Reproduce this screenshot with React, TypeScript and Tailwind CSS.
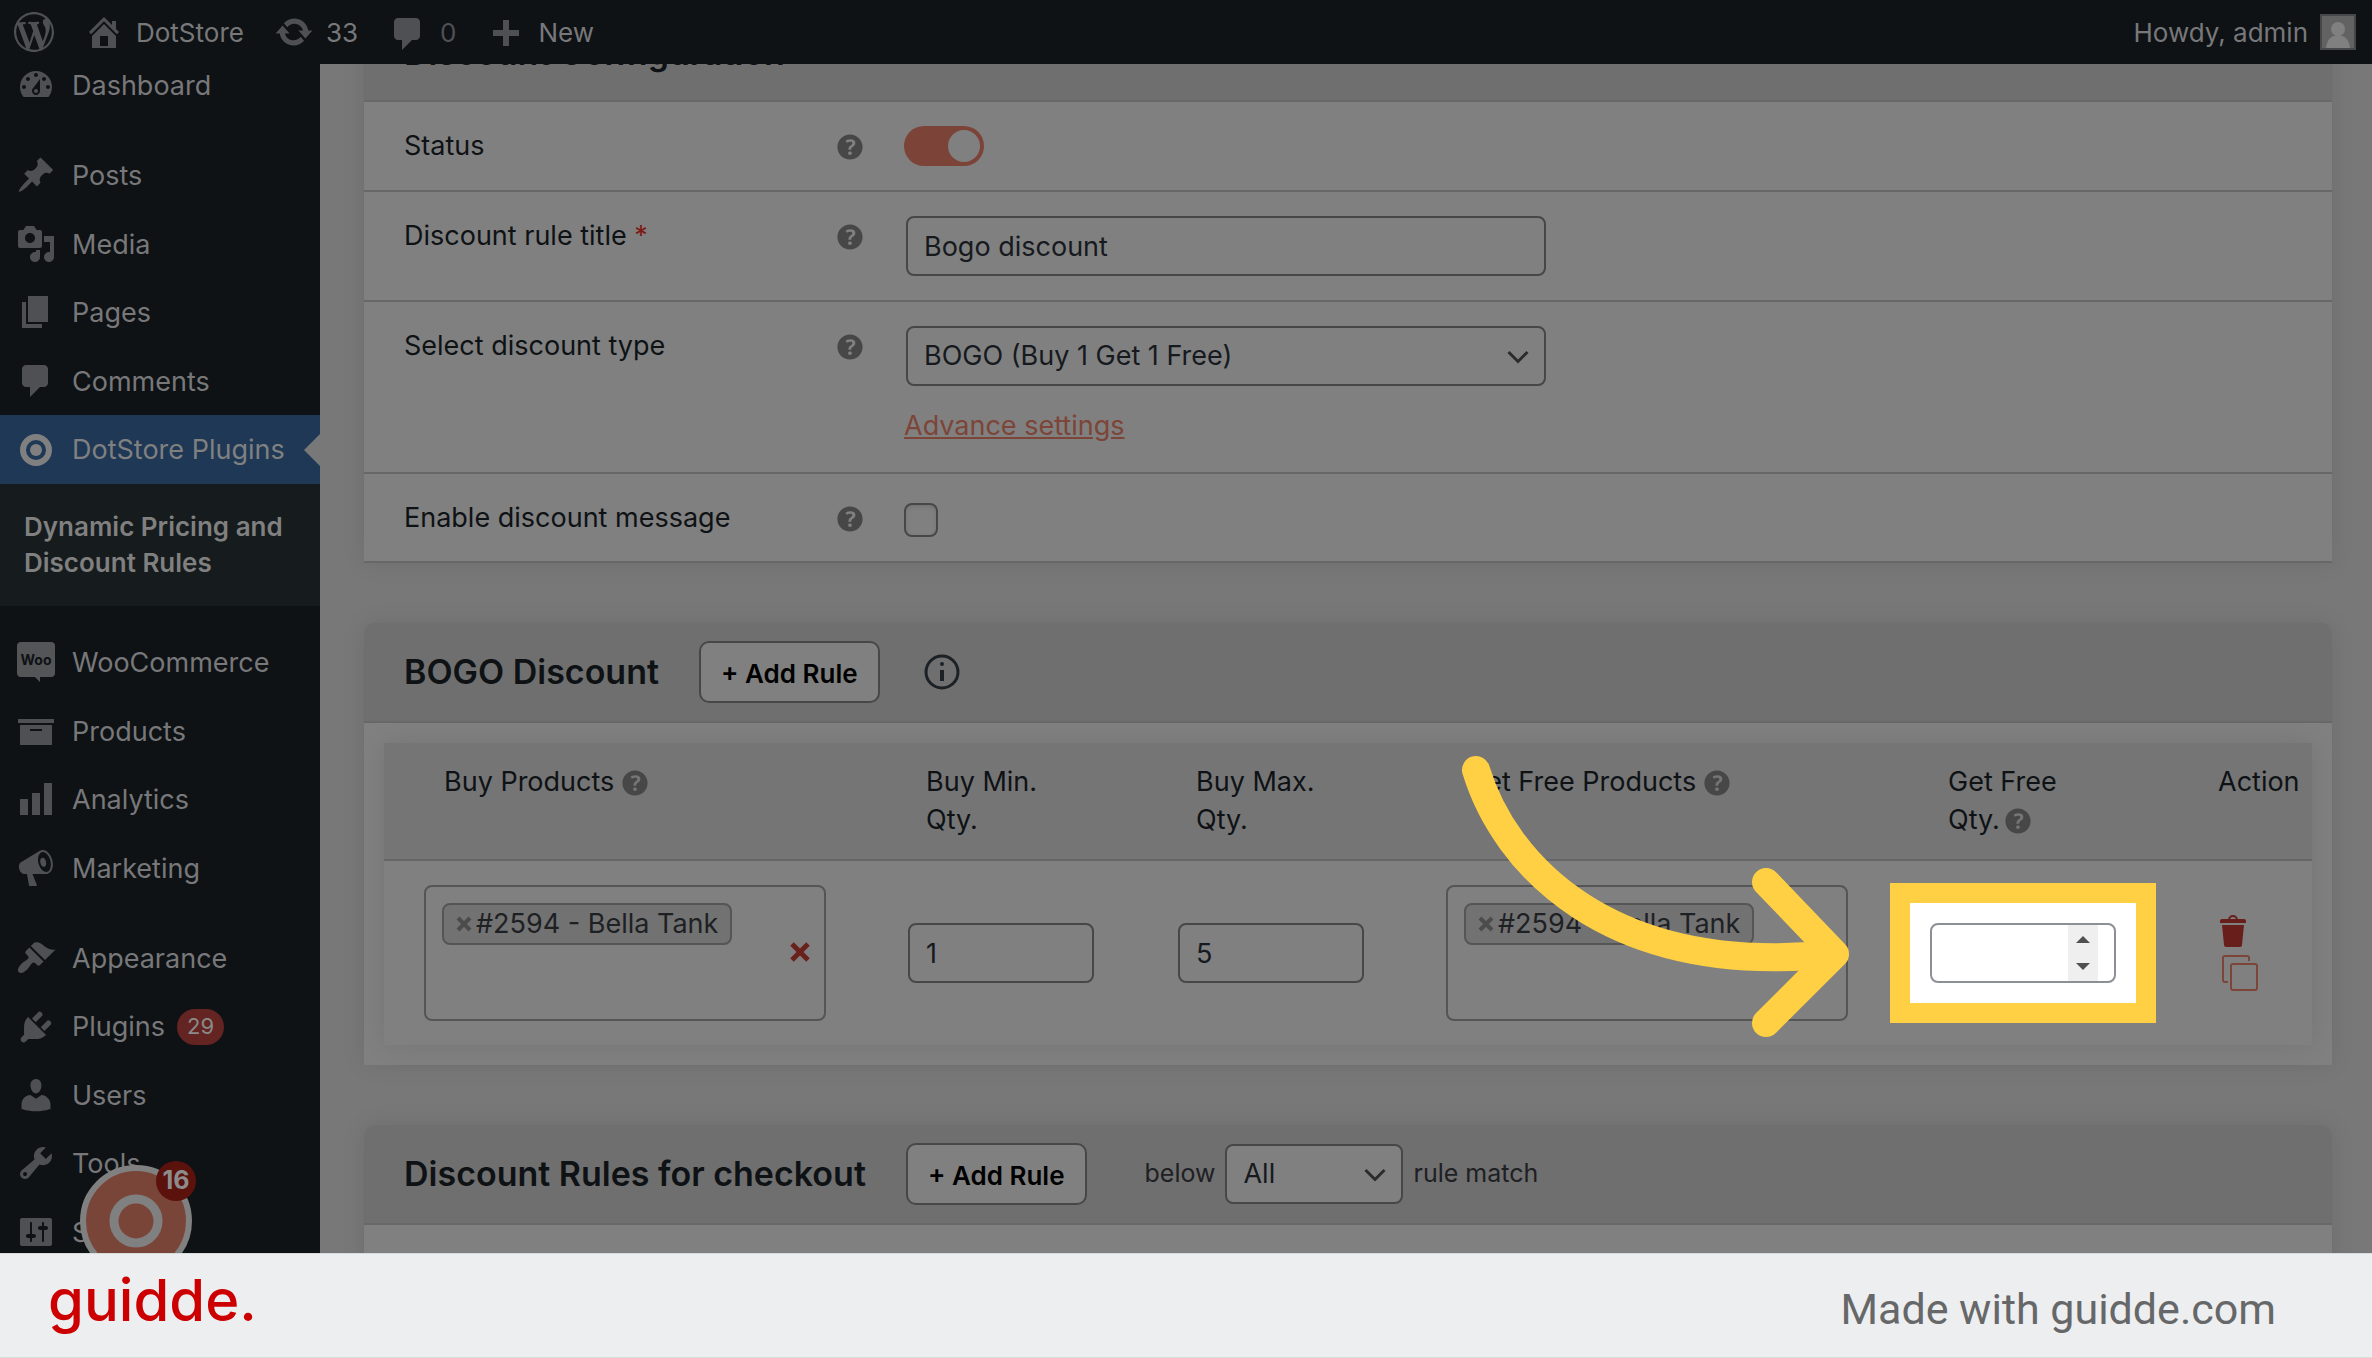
import React, { useState } from 'react';
import clsx from 'clsx';

const icons = {
  wordpress:
    'M20 10c0-5.51-4.49-10-10-10C4.48 0 0 4.49 0 10c0 5.52 4.48 10 10 10 5.51 0 10-4.48 10-10zM7.78 15.37L4.37 6.22c.55-.02 1.17-.08 1.17-.08.5-.06.44-1.13-.06-1.11 0 0-1.45.11-2.37.11-.18 0-.37 0-.58-.01C4.12 2.69 6.87 1.11 10 1.11c2.33 0 4.45.87 6.05 2.34-.68-.11-1.65.39-1.65 1.58 0 .74.45 1.36.9 2.1.35.61.55 1.36.55 2.46 0 1.49-1.4 5-1.4 5l-3.03-8.37c.54-.02.82-.17.82-.17.5-.05.44-1.25-.06-1.22 0 0-1.44.12-2.38.12-.87 0-2.33-.12-2.33-.12-.5-.03-.56 1.2-.06 1.22l.92.08 1.26 3.41zM17.41 10c.24-.64.74-1.87.43-4.25.7 1.29 1.05 2.71 1.05 4.25 0 3.29-1.73 6.24-4.4 7.78.97-2.59 1.94-5.2 2.92-7.78zM6.1 18.09C3.12 16.65 1.11 13.53 1.11 10c0-1.3.23-2.48.72-3.59C3.25 10.3 4.67 14.2 6.1 18.09zm4.03-6.63l2.58 6.98c-.86.29-1.76.45-2.71.45-.79 0-1.57-.11-2.29-.33.81-2.38 1.62-4.74 2.42-7.1z',
  home: 'M16 8.5l1.53 1.53-1.06 1.06L10 4.6l-6.47 6.49-1.06-1.06L10 2.5l4 4v-2h2v4zm-6-2.46l6 5.99V18H4v-5.97zM12 17v-5H8v5h4z',
  update:
    'M10.2 3.28c3.53 0 6.43 2.61 6.92 6h2.08l-3.5 4-3.5-4h2.32c-.45-1.97-2.21-3.45-4.32-3.45-1.45 0-2.73.71-3.54 1.78L4.95 5.66C6.23 4.2 8.11 3.28 10.2 3.28zm-.4 13.44c-3.52 0-6.43-2.61-6.92-6H.8l3.5-4c1.17 1.33 2.33 2.67 3.5 4H5.48c.45 1.97 2.21 3.45 4.32 3.45 1.45 0 2.73-.71 3.54-1.78l1.71 1.95c-1.28 1.46-3.15 2.38-5.25 2.38z',
  comments: 'M5 2h9c1.1 0 2 .9 2 2v7c0 1.1-.9 2-2 2h-2l-5 5v-5H5c-1.1 0-2-.9-2-2V4c0-1.1.9-2 2-2z',
  plus: 'M16.5 9v3h-5v5h-3v-5h-5V9h5V4h3v5h5z',
  dashboard:
    'M3.76 16h12.48c1.1-1.37 1.76-3.11 1.76-5 0-4.42-3.58-8-8-8s-8 3.58-8 8c0 1.89.66 3.63 1.76 5zM10 4c.55 0 1 .45 1 1s-.45 1-1 1-1-.45-1-1 .45-1 1-1zM6 6c.55 0 1 .45 1 1s-.45 1-1 1-1-.45-1-1 .45-1 1-1zm8 0c.55 0 1 .45 1 1s-.45 1-1 1-1-.45-1-1 .45-1 1-1zm-5.37 5.55L12 7v6c0 1.1-.9 2-2 2s-2-.9-2-2c0-.57.24-1.08.63-1.45zM4 10c.55 0 1 .45 1 1s-.45 1-1 1-1-.45-1-1 .45-1 1-1zm12 0c.55 0 1 .45 1 1s-.45 1-1 1-1-.45-1-1 .45-1 1-1zm-5 3c0-.55-.45-1-1-1s-1 .45-1 1 .45 1 1 1 1-.45 1-1z',
  posts:
    'M10.44 3.02l1.82-1.82 6.36 6.35-1.83 1.82c-1.05-.68-2.48-.57-3.41.36l-.75.75c-.92.93-1.04 2.35-.35 3.41l-1.83 1.82-2.41-2.41-2.8 2.79c-.42.42-3.38 2.71-3.8 2.29s1.86-3.39 2.28-3.81l2.79-2.79L4.1 9.36l1.83-1.82c1.05.69 2.48.57 3.4-.36l.75-.75c.93-.92 1.05-2.35.36-3.41z',
  media:
    'M13 11V4c0-.55-.45-1-1-1h-1.67L9 1H5L3.67 3H2c-.55 0-1 .45-1 1v7c0 .55.45 1 1 1h10c.55 0 1-.45 1-1zM7 4.5c1.38 0 2.5 1.12 2.5 2.5S8.38 9.5 7 9.5 4.5 8.38 4.5 7 5.62 4.5 7 4.5zM14 6h5v10.5c0 1.38-1.12 2.5-2.5 2.5S14 17.88 14 16.5s1.12-2.5 2.5-2.5c.17 0 .34.02.5.05V9h-3V6zm-4 8.05V13h2v3.5c0 1.38-1.12 2.5-2.5 2.5S7 17.88 7 16.5 8.12 14 9.5 14c.17 0 .34.02.5.05z',
  pages: 'M6 15V2h10v13H6zm-1 1h8v2H3V5h2v11z',
  products: 'M19 4v2H1V4h18zM2 7h16v10H2V7zm11 3V9H7v1h6z',
  analytics: 'M18 18V2h-4v16h4zm-6 0V7H8v11h4zm-6 0v-8H2v8h4z',
  marketing:
    'M18.15 5.94c.46 1.62.38 3.22-.02 4.48-.42 1.28-1.26 2.18-2.3 2.48-.16.06-.26.06-.4.06-.06.02-.12.02-.18.02-.06.02-.14.02-.22.02h-6.8l2.22 5.5c.02.14-.06.26-.14.34-.08.1-.24.16-.34.16H6.95c-.1 0-.26-.06-.34-.16-.08-.08-.16-.2-.14-.34l-1-5.5H4.25l-.02-.02c-.5.06-1.08-.18-1.54-.62s-.88-1.08-1.06-1.88c-.24-.8-.2-1.56-.02-2.2.18-.62.58-1.08 1.06-1.3l.02-.02 9-5.4c.1-.06.18-.1.24-.16.06-.04.14-.08.24-.12.16-.08.28-.12.5-.18 1.04-.3 2.24.1 3.22.98s1.84 2.24 2.26 3.86zm-2.58 5.98h-.02c.4-.1.74-.34 1.04-.7.58-.7.86-1.76.86-3.04 0-.64-.1-1.3-.28-1.98-.34-1.36-1.02-2.5-1.78-3.24s-1.68-1.1-2.46-.88c-.82.22-1.4.96-1.7 2-.32 1.04-.28 2.36.06 3.72.38 1.36 1 2.5 1.8 3.24.78.74 1.62 1.1 2.48.88zm-2.54-7.08c.22-.04.42-.02.62.04.38.16.76.48 1.02 1s.42 1.2.42 1.78c0 .3-.04.56-.12.8-.18.48-.44.84-.86.94-.34.1-.8-.06-1.14-.4s-.64-.86-.78-1.5c-.18-.62-.12-1.24.02-1.72s.48-.84.82-.94z',
  appearance:
    'M14.48 11.06L7.41 3.99l1.5-1.5c.5-.56 2.3-.47 3.51.32 1.21.8 1.43 1.28 2.91 2.1 1.18.64 2.45 1.26 4.45.85zm-.71.71L6.7 4.7 4.93 6.47c-.39.39-.39 1.02 0 1.41l1.06 1.06c.39.39.39 1.03 0 1.42-.6.6-1.43 1.11-2.21 1.69-.35.26-.7.53-1.01.84C1.43 14.23.4 16.08 1.4 17.07c.99 1 2.84-.03 4.18-1.36.31-.31.58-.66.85-1.02.57-.78 1.08-1.61 1.69-2.21.39-.39 1.02-.39 1.41 0l1.06 1.06c.39.39 1.02.39 1.41 0z',
  plugins:
    'M13.11 4.36L9.87 7.6 8 5.73l3.24-3.24c.35-.34 1.05-.2 1.56.32.52.51.66 1.21.31 1.55zm-8 1.77l.91-1.12 9.01 9.01-1.19.84c-.71.71-2.63 1.16-3.82 1.16H6.14L4.9 17.26c-.59.59-1.54.59-2.12 0-.59-.58-.59-1.53 0-2.12l1.24-1.24v-3.88c0-1.13.4-3.19 1.09-3.89zm7.26 3.97l3.24-3.24c.34-.35 1.04-.21 1.55.31.52.51.66 1.21.31 1.55l-3.24 3.25z',
  users:
    'M10 9.25c-2.27 0-2.73-3.44-2.73-3.44C7 4.02 7.82 2 9.97 2c2.16 0 2.98 2.02 2.71 3.81 0 0-.41 3.44-2.68 3.44zm0 2.57L12.72 10c2.39 0 4.52 2.33 4.52 4.53v2.49s-3.65 1.13-7.24 1.13c-3.65 0-7.24-1.13-7.24-1.13v-2.49c0-2.25 1.94-4.48 4.47-4.48z',
  tools:
    'M16.68 9.77c-1.34 1.34-3.3 1.67-4.95.99l-5.41 6.52c-.99.99-2.59.99-3.58 0s-.99-2.59 0-3.57l6.52-5.42c-.68-1.65-.35-3.61.99-4.95 1.28-1.28 3.12-1.62 4.72-1.06l-2.89 2.89 2.82 2.82 2.86-2.87c.53 1.58.18 3.39-1.08 4.65zM3.81 16.21c.4.39 1.04.39 1.43 0 .4-.4.4-1.04 0-1.43-.39-.4-1.03-.4-1.43 0-.39.39-.39 1.03 0 1.43z',
  settings:
    'M18 16V4c0-.55-.45-1-1-1H3c-.55 0-1 .45-1 1v12c0 .55.45 1 1 1h14c.55 0 1-.45 1-1zM8 11h1c.55 0 1 .45 1 1s-.45 1-1 1H8v1.5c0 .28-.22.5-.5.5s-.5-.22-.5-.5V13H6c-.55 0-1-.45-1-1s.45-1 1-1h1V5.5c0-.28.22-.5.5-.5s.5.22.5.5V11zm5-2h-1c-.55 0-1-.45-1-1s.45-1 1-1h1V5.5c0-.28.22-.5.5-.5s.5.22.5.5V7h1c.55 0 1 .45 1 1s-.45 1-1 1h-1v5.5c0 .28-.22.5-.5.5s-.5-.22-.5-.5V9z',
  help: 'M17 10c0-3.87-3.14-7-7-7-3.87 0-7 3.13-7 7s3.13 7 7 7c3.86 0 7-3.13 7-7zm-6.3 1.48H9.14v-.43c0-.38.08-.7.24-.98s.46-.57.88-.89c.41-.29.68-.53.81-.71.14-.18.2-.39.2-.62 0-.25-.09-.44-.28-.58-.19-.13-.45-.19-.79-.19-.58 0-1.25.19-2 .57l-.64-1.28c.87-.49 1.8-.74 2.77-.74.81 0 1.45.2 1.92.58.48.39.71.91.71 1.55 0 .43-.09.8-.29 1.11-.19.32-.57.67-1.11 1.06-.38.28-.61.49-.71.63-.1.15-.15.34-.15.57v.35zm-1.47 2.74c-.18-.17-.27-.42-.27-.73 0-.33.08-.58.26-.75s.43-.25.77-.25c.32 0 .57.09.75.26s.27.42.27.74c0 .3-.09.55-.27.72-.18.18-.43.27-.75.27-.33 0-.58-.09-.76-.26z',
};

type IconName = keyof typeof icons;

const Icon: React.FC<{ name: IconName; className?: string }> = ({ name, className }) => (
  <svg viewBox="0 0 20 20" fill="currentColor" aria-hidden="true" className={clsx('shrink-0', className)}>
    <path d={icons[name]} />
  </svg>
);

const Help: React.FC<{ className?: string }> = ({ className }) => (
  <Icon name="help" className={clsx('h-9 w-9 text-[#474747]', className)} />
);

const Chevron: React.FC = () => (
  <svg
    viewBox="0 0 22 14"
    fill="none"
    stroke="#2a2b2c"
    strokeWidth="3"
    aria-hidden="true"
    className="pointer-events-none absolute top-6 right-[17px] h-[14px] w-[22px]"
  >
    <path d="M1.5 2l9.5 9.5L20.5 2" />
  </svg>
);

const WooIcon: React.FC = () => (
  <svg viewBox="0 0 40 40" aria-hidden="true" className="h-10 w-10 shrink-0 text-[#545557]">
    <path fill="currentColor" d="M5 0h30a4 4 0 0 1 4 4v27a4 4 0 0 1-4 4H24v5l-5-5H5a4 4 0 0 1-4-4V4a4 4 0 0 1 4-4z" />
    <text x="20" y="23" textAnchor="middle" fontSize="14" fontWeight="700" fill="#0e1215">
      Woo
    </text>
  </svg>
);

const navGroups: { icon: IconName | 'woo'; label: string; count?: number }[][] = [
  [
    { icon: 'posts', label: 'Posts' },
    { icon: 'media', label: 'Media' },
    { icon: 'pages', label: 'Pages' },
    { icon: 'comments', label: 'Comments' },
  ],
  [
    { icon: 'woo', label: 'WooCommerce' },
    { icon: 'products', label: 'Products' },
    { icon: 'analytics', label: 'Analytics' },
    { icon: 'marketing', label: 'Marketing' },
  ],
  [
    { icon: 'appearance', label: 'Appearance' },
    { icon: 'plugins', label: 'Plugins', count: 29 },
    { icon: 'users', label: 'Users' },
    { icon: 'tools', label: 'Tools' },
    { icon: 'settings', label: 'Settings' },
  ],
];

const NavGroup: React.FC<{ items: (typeof navGroups)[number]; className: string }> = ({ items, className }) => (
  <ul className={clsx('flex shrink-0 flex-col', className)}>
    {items.map((item) => (
      <li key={item.label} className="flex flex-1">
        <a href="#" className="flex flex-1 items-center gap-4 pl-4">
          {item.icon === 'woo' ? <WooIcon /> : <Icon name={item.icon} className="h-10 w-10 text-[#4e5053]" />}
          <span className="pt-[2px]">{item.label}</span>
          {item.count && (
            <span className="-ml-1 flex h-9 items-center rounded-full bg-[#632422] px-[10px] text-[22px] text-[#8a8a8a]">
              {item.count}
            </span>
          )}
        </a>
      </li>
    ))}
  </ul>
);

const TopBar: React.FC = () => (
  <header className="z-10 flex h-16 shrink-0 items-center gap-[30px] bg-[#0e1215] pr-4 pl-[14px] text-[26px] text-[#78787a]">
    <a href="#" aria-label="About WordPress">
      <Icon name="wordpress" className="h-10 w-10 text-[#4e5053]" />
    </a>
    <a href="#" className="flex items-center gap-3">
      <Icon name="home" className="h-10 w-10 text-[#4e5053]" />
      DotStore
    </a>
    <a href="#" className="flex items-center gap-3">
      <Icon name="update" className="h-10 w-10 text-[#4e5053]" />
      33
    </a>
    <a href="#" className="flex items-center gap-3 text-[#4e5053]">
      <Icon name="comments" className="mt-1 h-10 w-10" />
      0
    </a>
    <a href="#" className="flex items-center gap-3">
      <Icon name="plus" className="h-10 w-10 text-[#4e5053]" />
      New
    </a>
    <a href="#" className="ml-auto flex items-center gap-3">
      Howdy, admin
      <svg viewBox="0 0 36 36" aria-hidden="true" className="h-9 w-9">
        <rect x="1" y="1" width="34" height="34" fill="#626262" stroke="#464749" strokeWidth="2" />
        <circle cx="18" cy="15" r="7" fill="#808080" />
        <path d="M6 34c1-8 5-13 12-13s11 5 12 13z" fill="#808080" />
      </svg>
    </a>
  </header>
);

const Sidebar: React.FC = () => (
  <nav className="flex w-[320px] shrink-0 flex-col overflow-hidden bg-[#0e1215] text-[27px] text-[#78787a]">
    <a href="#" className="-mt-[13px] mb-[22px] flex h-[68px] shrink-0 items-center gap-4 pl-4">
      <Icon name="dashboard" className="h-10 w-10 text-[#4e5053]" />
      <span className="pt-[2px]">Dashboard</span>
    </a>
    <NavGroup items={navGroups[0]} className="h-[274px]" />
    <a href="#" className="flex h-[69px] shrink-0 items-center gap-4 bg-[#1e3856] pl-4 text-[#808080]">
      <svg viewBox="0 0 40 40" aria-hidden="true" className="h-10 w-10 shrink-0">
        <circle cx="20" cy="20" r="13" fill="none" stroke="currentColor" strokeWidth="6" />
        <circle cx="20" cy="20" r="6" fill="currentColor" />
      </svg>
      <span className="pt-[2px] whitespace-nowrap">DotStore Plugins</span>
      <svg viewBox="0 0 16 32" aria-hidden="true" className="ml-auto h-8 w-4 shrink-0">
        <path d="M16 0v32L0 16z" fill="#787878" />
      </svg>
    </a>
    <a
      href="#"
      className="mb-[22px] flex h-[122px] shrink-0 items-center bg-[#161b1d] px-6 text-[26px] leading-9 font-semibold text-[#808080]"
    >
      Dynamic Pricing and Discount Rules
    </a>
    <NavGroup items={navGroups[1]} className="mb-[22px] h-[274px]" />
    <NavGroup items={navGroups[2]} className="h-[342px]" />
  </nav>
);

const Card: React.FC<{ header: React.ReactNode; children: React.ReactNode }> = ({ header, children }) => (
  <section className="rounded-t-[10px] bg-[#808080] shadow-[0_0_24px_rgba(0,0,0,0.09)]">
    <div className="flex h-[100px] items-center rounded-t-[10px] border-b-2 border-[#686868] bg-[#6f6f6f] px-10">
      {header}
    </div>
    {children}
  </section>
);

const CardTitle: React.FC<{ className?: string; children: React.ReactNode }> = ({ className, children }) => (
  <h2 className={clsx('mr-10 text-[34px] leading-[44px] font-semibold text-[#0e1215]', className)}>{children}</h2>
);

const AddRule: React.FC = () => (
  <button
    type="button"
    className="h-[62px] rounded-[10px] border-2 border-[#464749] bg-[#808080] px-5 pt-[2px] text-[26px] font-semibold text-black"
  >
    + Add Rule
  </button>
);

const SettingRow: React.FC<{ label: string; htmlFor: string; required?: boolean; children: React.ReactNode }> = ({
  label,
  htmlFor,
  required,
  children,
}) => (
  <div className="flex border-b-2 border-[#676767] px-10 py-6">
    <label htmlFor={htmlFor} className="w-[428px] shrink-0 leading-[39px] text-[#0e1215]">
      {label} {required && <span className="text-[#7c1a16]">*</span>}
    </label>
    <Help className="mt-[3px] mr-9" />
    <div>{children}</div>
  </div>
);

const field = 'block h-[60px] rounded-lg border-2 border-[#464749] bg-[#808080] px-4 text-[27px] text-[#161a1e]';

const ProductPicker: React.FC<{ label: string }> = ({ label }) => (
  <div
    role="group"
    aria-label={label}
    className="relative h-[136px] w-[402px] max-w-full rounded-lg border-2 border-[#555555] px-4 py-4"
  >
    <span className="inline-flex h-[42px] items-center gap-1 rounded-lg border-2 border-[#555555] bg-[#727272] px-3 whitespace-nowrap text-[#1e2124]">
      <button type="button" aria-label="Remove product" className="text-[#4c4c4c]">
        <svg viewBox="0 0 16 16" stroke="currentColor" strokeWidth="4" className="h-4 w-4">
          <path d="M2 2l12 12M14 2L2 14" />
        </svg>
      </button>
      #2594 - Bella Tank
    </span>
    <button type="button" aria-label="Clear products" className="absolute top-[55px] right-[14px] text-[#6a211b]">
      <svg viewBox="0 0 20 20" stroke="currentColor" strokeWidth="5" className="h-5 w-5">
        <path d="M2 2l16 16M18 2L2 18" />
      </svg>
    </button>
  </div>
);

// Yellow curved arrow that points at the highlighted field
const PointerArrow: React.FC = () => (
  <svg
    viewBox="0 0 400 296"
    fill="none"
    stroke="#ffd043"
    strokeWidth="28"
    strokeLinecap="round"
    strokeLinejoin="round"
    aria-hidden="true"
    className="pointer-events-none absolute top-[-173px] right-full mr-[74px] h-[296px] w-[400px] max-w-none"
  >
    <path d="M20 20C48 112 150 228 378 204" />
    <path d="M310 132l69 72-69 69" />
  </svg>
);

const BogoTable: React.FC = () => (
  <table className="w-full table-fixed bg-[#808080] text-left shadow-[0_0_24px_rgba(0,0,0,0.09)]">
    <colgroup>
      <col className="w-[504px]" />
      <col className="w-[270px]" />
      <col className="w-[268px]" />
      <col className="w-[484px]" />
      <col className="w-[270px]" />
      <col className="w-[132px]" />
    </colgroup>
    <thead>
      <tr className="border-b-2 border-[#666666] bg-[#757575] align-top leading-[38px] text-[#0e1215]">
        <th className="py-5 pl-[60px] font-normal">
          Buy Products
          <Help className="ml-[3px] inline align-[-10px]" />
        </th>
        <th className="py-5 pl-[38px] font-normal">
          Buy Min.
          <br />
          Qty.
        </th>
        <th className="py-5 pl-[38px] font-normal">
          Buy Max.
          <br />
          Qty.
        </th>
        <th className="py-5 pl-10 font-normal">
          Get Free Products
          <Help className="ml-[3px] inline align-[-10px]" />
        </th>
        <th className="py-5 pl-[38px] font-normal">
          Get Free
          <br />
          Qty.
          <Help className="inline align-[-10px]" />
        </th>
        <th className="py-5 pl-[38px] font-normal">Action</th>
      </tr>
    </thead>
    <tbody>
      <tr>
        <td className="py-6 pl-10">
          <ProductPicker label="Buy products" />
        </td>
        <td className="pl-5">
          <input type="number" aria-label="Buy min. qty." defaultValue={1} className={clsx(field, 'w-[186px]')} />
        </td>
        <td className="pl-5">
          <input type="number" aria-label="Buy max. qty." defaultValue={5} className={clsx(field, 'w-[186px]')} />
        </td>
        <td className="pl-5">
          <ProductPicker label="Get free products" />
        </td>
        <td className="pl-5">
          <div className="relative w-[186px]">
            <div className="absolute -inset-10 border-[20px] border-[#ffd043] bg-white" />
            <PointerArrow />
            <input
              type="number"
              aria-label="Get free qty."
              className="relative block h-[60px] w-full rounded-lg border-2 border-[#8c8f94] bg-white px-4 text-black"
            />
            <div className="absolute top-[2px] right-[18px] flex h-14 w-[30px] flex-col items-center justify-center gap-5 bg-[#efefef]">
              <svg viewBox="0 0 14 7" fill="#505050" className="h-[7px] w-[14px]">
                <path d="M0 7l7-7 7 7z" />
              </svg>
              <svg viewBox="0 0 14 7" fill="#505050" className="h-[7px] w-[14px]">
                <path d="M0 0l7 7 7-7z" />
              </svg>
            </div>
          </div>
        </td>
        <td className="pl-10">
          <button type="button" aria-label="Delete rule" className="mb-2 block text-[#681f1b]">
            <svg viewBox="0 0 26 32" fill="currentColor" className="h-8 w-[26px]">
              <path d="M9 5a4 4 0 0 1 8 0" fill="none" stroke="currentColor" strokeWidth="2" />
              <path d="M2 4h22a2 2 0 0 1 2 2v2H0V6a2 2 0 0 1 2-2zM2 10h22l-2 20a2 2 0 0 1-2 2H6a2 2 0 0 1-2-2z" />
            </svg>
          </button>
          <button type="button" aria-label="Duplicate rule" className="ml-[2px] block text-[#7c4538]">
            <svg viewBox="0 0 36 36" fill="none" stroke="currentColor" strokeWidth="2" className="h-9 w-9">
              <rect x="9" y="9" width="26" height="26" rx="2" />
              <path d="M27 6V3a2 2 0 0 0-2-2H3a2 2 0 0 0-2 2v22a2 2 0 0 0 2 2h3" />
            </svg>
          </button>
        </td>
      </tr>
    </tbody>
  </table>
);

const SupportBubble: React.FC = () => (
  <button type="button" aria-label="Open support" className="absolute bottom-[-24px] left-20 h-28 w-28">
    <svg viewBox="0 0 112 112" aria-hidden="true" className="h-28 w-28">
      <circle cx="56" cy="56" r="53" fill="#7a4539" stroke="#808080" strokeWidth="6" />
      <circle cx="56" cy="56" r="22" fill="none" stroke="#808080" strokeWidth="9" />
    </svg>
    <span className="absolute -top-1 -right-1 flex h-10 w-10 items-center justify-center rounded-full bg-[#5c120c] text-[25px] font-bold text-[#8c8c8c]">
      16
    </span>
  </button>
);

const App: React.FC = () => {
  const [enabled, setEnabled] = useState(true);

  return (
    <div className="flex h-screen flex-col overflow-hidden bg-[#787878] font-[Inter,'Liberation_Sans',sans-serif] text-[27px]">
      <TopBar />
      <div className="relative flex min-h-0 flex-1 overflow-hidden">
        <Sidebar />
        <main className="min-w-0 flex-1 overflow-hidden">
          <div className="-mt-[62px] flex flex-col gap-[60px] pr-10 pl-11">
            <Card header={<CardTitle className="pt-1">Discount Configuration</CardTitle>}>
              <SettingRow label="Status" htmlFor="status">
                <input
                  id="status"
                  type="checkbox"
                  role="switch"
                  checked={enabled}
                  onChange={() => setEnabled(!enabled)}
                  className="block h-10 w-20 appearance-none rounded-full bg-[#555555] p-1 before:block before:h-8 before:w-8 before:rounded-full before:bg-[#808080] checked:bg-[#7c4338] checked:before:ml-10"
                />
              </SettingRow>
              <SettingRow label="Discount rule title" htmlFor="title" required>
                <input id="title" type="text" defaultValue="Bogo discount" className={clsx(field, 'ml-[2px] w-[640px]')} />
              </SettingRow>
              <SettingRow label="Select discount type" htmlFor="type">
                <div className="relative ml-[2px] w-[640px]">
                  <select id="type" className={clsx(field, 'w-full appearance-none')}>
                    <option>BOGO (Buy 1 Get 1 Free)</option>
                  </select>
                  <Chevron />
                </div>
                <a href="#" className="mt-5 mb-[2px] block w-fit leading-[40px] text-[#7c4538] underline underline-offset-2">
                  Advance settings
                </a>
              </SettingRow>
              <SettingRow label="Enable discount message" htmlFor="message">
                <input
                  id="message"
                  type="checkbox"
                  className="mt-[5px] block h-[34px] w-[34px] appearance-none rounded-lg border-2 border-[#464749] bg-[#808080] shadow-[inset_0_2px_4px_rgba(0,0,0,0.1)]"
                />
              </SettingRow>
            </Card>

            <Card
              header={
                <>
                  <CardTitle>BOGO Discount</CardTitle>
                  <AddRule />
                  <svg viewBox="0 0 36 36" fill="none" stroke="#1c2125" aria-hidden="true" className="ml-11 h-9 w-9">
                    <circle cx="18" cy="18" r="16" strokeWidth="3" />
                    <path d="M18 16v11" strokeWidth="4" />
                    <circle cx="18" cy="10" r="2" fill="#1c2125" stroke="none" />
                  </svg>
                </>
              }
            >
              <div className="p-5">
                <BogoTable />
              </div>
            </Card>

            <Card
              header={
                <>
                  <CardTitle>Discount Rules for checkout</CardTitle>
                  <AddRule />
                  <label className="ml-[58px] flex items-center gap-[10px] text-[25px] text-[#1e2023]">
                    below
                    <span className="relative w-[178px]">
                      <select className={clsx(field, 'w-full appearance-none')}>
                        <option>All</option>
                      </select>
                      <Chevron />
                    </span>
                    rule match
                  </label>
                </>
              }
            >
              <div className="h-40" />
            </Card>
          </div>
        </main>
        <SupportBubble />
      </div>
      <footer className="z-10 flex h-[105px] shrink-0 items-center justify-between border-y border-[#dadbdd] bg-[#edeef0] pr-24 pl-12">
        <span className="pb-3 text-[58px] leading-[64px] font-medium text-[#cc0000]">guidde.</span>
        <span className="pt-[6px] font-[Roboto,sans-serif] text-[43px] leading-[52px] text-[#666769]">
          Made with guidde.com
        </span>
      </footer>
    </div>
  );
};

export default App;
